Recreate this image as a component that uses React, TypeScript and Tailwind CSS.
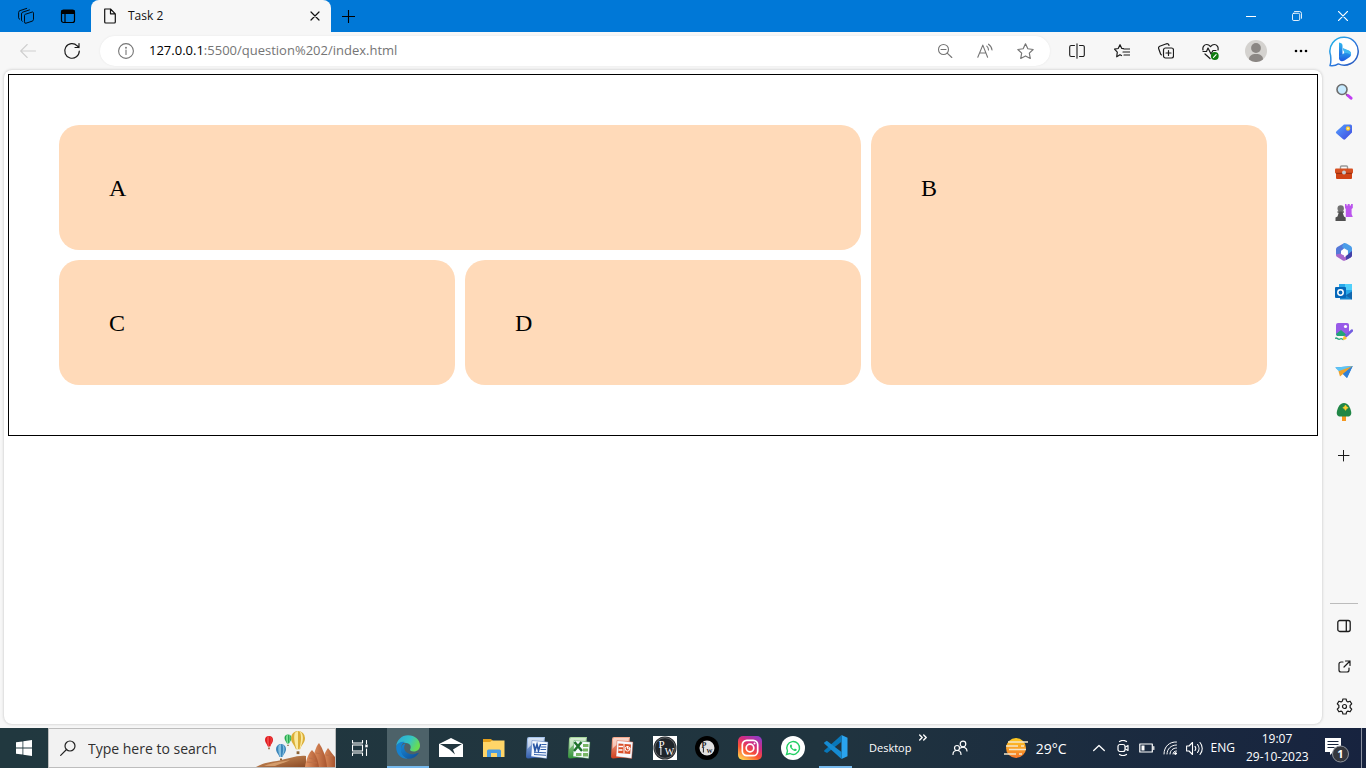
import React, { type ReactNode } from 'react';

type IconProps = { size?: number; box?: string; className?: string; width?: number; children: ReactNode };

function Line({ size = 16, box = '0 0 16 16', className = '', width = 1.1, children }: IconProps) {
  return (
    <svg width={size} height={size} viewBox={box} fill="none" stroke="currentColor" strokeWidth={width}
      strokeLinecap="round" strokeLinejoin="round" className={`shrink-0 ${className}`} aria-hidden="true">
      {children}
    </svg>
  );
}

function Art({ size = 18, box = '0 0 18 18', className = '', children }: IconProps) {
  return (
    <svg width={size} height={size} viewBox={box} className={`shrink-0 ${className}`} aria-hidden="true">
      {children}
    </svg>
  );
}

function IconButton({ label, className = '', children }: { label: string; className?: string; children: ReactNode }) {
  return (
    <button type="button" aria-label={label} className={`flex shrink-0 items-center justify-center ${className}`}>
      {children}
    </button>
  );
}

function TitleBar() {
  return (
    <header className="flex h-8 shrink-0 bg-[#0078d7]">
      <IconButton label="Workspaces" className="ml-1 w-11">
        <Line size={18} box="0 0 18 18" width={0.9}>
          <path d="M7.500 8.300a1 1 0 0 1 .8-1l6.700-2.200a1 1 0 0 1 1.500 1v6.200a2 2 0 0 1-1.400 1.900l-6.100 2a1.100 1.100 0 0 1-1.500-1z" />
          <path d="M5.200 14.300a1.500 1.500 0 0 1-.7-1.300V7a2 2 0 0 1 1.400-1.900l6.600-2.200" />
          <path d="M2.600 12.200a1.500 1.500 0 0 1-1-1.400V5.500A2 2 0 0 1 3 3.600l6.700-2.200" />
        </Line>
      </IconButton>
      <IconButton label="Tab actions" className="mr-[3px] w-10">
        <Line width={1.2}>
          <rect x="1.500" y="2" width="13" height="12.500" rx="2" />
          <path d="M2 2.500h12v3H2z" fill="currentColor" />
          <path d="M5 6v8" />
        </Line>
      </IconButton>
      <div className="flex w-60 items-center rounded-t-lg bg-[#f7f7f7] pl-[11px] pr-2 text-[#111]">
        <Line size={16} width={1.2} className="mr-[10px]">
          <path d="M2.700 1h5.800l4.800 4.800V14a1 1 0 0 1-1 1H3.700a1 1 0 0 1-1-1z M8.500 1v4.800h4.800" />
        </Line>
        <span className="grow text-[12px] tracking-normal">Task 2</span>
        <IconButton label="Close tab" className="size-4">
          <Line size={10} box="0 0 10 10" width={1.2}><path d="m1 1 8 8M9 1 1 9" /></Line>
        </IconButton>
      </div>
      <IconButton label="New tab" className="w-[35px]">
        <Line size={13} box="0 0 13 13"><path d="M6.500 0v13M0 6.500h13" /></Line>
      </IconButton>
      <div className="ml-auto flex text-white">
        <IconButton label="Minimize" className="w-[46px]">
          <Line size={10} box="0 0 10 10" width={1}><path d="M0 5.500h10" /></Line>
        </IconButton>
        <IconButton label="Restore" className="w-[46px]">
          <Line size={10} box="0 0 11 11" width={1}>
            <rect x=".5" y="2.500" width="8" height="8" rx="1.500" />
            <path d="M2.800.5H8A2.500 2.500 0 0 1 10.500 3v5" />
          </Line>
        </IconButton>
        <IconButton label="Close" className="w-[46px]">
          <Line size={10} box="0 0 10 10" width={1.2}><path d="m0 0 10 10M10 0 0 10" /></Line>
        </IconButton>
      </div>
    </header>
  );
}

function Toolbar() {
  return (
    <div className="flex h-[38px] shrink-0 items-center text-[#1b1b1b]">
      <IconButton label="Back" className="ml-2 h-8 w-10 text-[#cfcfcf]">
        <Line size={16}><path d="M15.500 8H.7M7.200 1.500.7 8l6.500 6.500" /></Line>
      </IconButton>
      <IconButton label="Refresh" className="ml-1 h-8 w-10">
        <Line size={18} box="0 0 18 18" width={1.200}>
          <path d="M16.300 9A7.300 7.300 0 1 1 14.200 3.800L16 5.500M16 1.500v4h-4" />
        </Line>
      </IconButton>
      <form className="ml-2 flex h-[30px] grow items-center rounded-full bg-white pl-[18px] pr-[5px] text-[#757575] shadow-[0_0_2px_#e4e4e4]">
        <IconButton label="Site information" className="size-4">
          <Line width={1.100}>
            <circle cx="8" cy="8" r="7.400" /><path d="M8 7v4.500" /><circle cx="8" cy="4.700" r=".4" />
          </Line>
        </IconButton>
        <p className="ml-[15px] grow text-[13px]">
          <span className="text-black">127.0.0.1</span>:5500/question%202/index.html
        </p>
        <IconButton label="Zoom" className="w-10">
          <Line><circle cx="6.500" cy="6.500" r="5" /><path d="m10.200 10.200 4.600 4.300M4 6.500h5" /></Line>
        </IconButton>
        <IconButton label="Read aloud" className="w-10">
          <Line><path d="m.8 14.300 5-12.200 4.800 12.200M2.600 10h6.200M9.800 3.200a5 5 0 0 1 1.700 3.800M11.500 1.200A8 8 0 0 1 15 7" /></Line>
        </IconButton>
        <IconButton label="Add to favorites" className="w-10">
          <Line size={17}><path d="m8 .8 2.200 4.600 5 .7-3.600 3.500.9 5L8 12.200l-4.500 2.400.9-5L.8 6.100l5-.7z" /></Line>
        </IconButton>
      </form>
      <div className="flex w-[272px] items-center pl-[5px]">
        <IconButton label="Split screen" className="w-11">
          <Line><path d="M5.500 2.500H2.200A1.500 1.500 0 0 0 .7 4v8a1.500 1.500 0 0 0 1.500 1.500h3.300M10.500 2.500h3.300A1.500 1.500 0 0 1 15.300 4v8a1.500 1.500 0 0 1-1.500 1.500h-3.300M8 .7v14.600" /></Line>
        </IconButton>
        <IconButton label="Favorites" className="w-[45px]">
          <Line width={1.200}>
            <path d="M9.500 5.700 7.800 5.400 6 1.700 4.200 5.500.5 6.200l2.800 3-.6 4.600L6 11.700l1.500.8M10 6h5.500M9 9h6.500M10 12h5.500" />
          </Line>
        </IconButton>
        <IconButton label="Collections" className="w-11">
          <Line width={1.200}>
            <rect x="5.500" y="5" width="10" height="10" rx="2" />
            <path d="M8 10h5M10.500 7.500v5M3.400 11.800 2.600 11 .7 5.800a2 2 0 0 1 1-2.500L8.500.8A2 2 0 0 1 11 2.500" />
          </Line>
        </IconButton>
        <IconButton label="Browser essentials" className="w-11">
          <Line size={17} box="0 0 17 17" width={1.200}>
            <path d="M1 7C.3 3.800 2.200 1.500 4.700 1.500c1.500 0 2.700.8 3.800 2.200 1.100-1.400 2.300-2.200 3.800-2.200 2.500 0 4.400 2.300 3.700 5.500M1 8.500h3.500L6 5l3 6 2-3.500h3M3 11l5 4.500" />
            <circle cx="12.800" cy="13" r="3.900" fill="#107c10" stroke="none" />
            <path d="m11.500 14.300 2.600-2.600" stroke="#fff" />
          </Line>
        </IconButton>
        <IconButton label="Profile" className="w-[47px]">
          <Art size={22} box="0 0 22 22">
            <circle cx="11" cy="11" r="11" fill="#d4d2cf" />
            <circle cx="11" cy="8" r="4.900" fill="#8b8784" />
            <path d="M4 19.500c0-3.600 2.500-5.500 7-5.500s7 1.900 7 5.500a11 11 0 0 1-14 0z" fill="#8b8784" />
          </Art>
        </IconButton>
        <IconButton label="Settings and more" className="w-11">
          <Art size={14} box="0 0 14 4">
            <circle cx="2" cy="2" r="1.300" /><circle cx="7" cy="2" r="1.300" /><circle cx="12" cy="2" r="1.300" />
          </Art>
        </IconButton>
      </div>
    </div>
  );
}

function Cell({ children, className = '' }: { children: ReactNode; className?: string }) {
  return <div className={`rounded-[20px] bg-[#ffdab9] px-[50px] pb-[48px] pt-[50px] ${className}`}>{children}</div>;
}

function Page() {
  return (
    <main className="mb-1 ml-1 grow rounded-lg bg-white p-1 shadow-[0_0_3px_#bdbdbd]">
      <div className="grid grid-cols-3 gap-[10px] border border-black p-[50px] font-['Liberation_Serif',serif] text-[24px] leading-[27px] text-black">
        <Cell className="col-span-2">A</Cell>
        <Cell className="row-span-2">B</Cell>
        <Cell>C</Cell>
        <Cell>D</Cell>
      </div>
    </main>
  );
}

function Bing() {
  return (
    <svg width="32" height="32" viewBox="0 0 32 32" className="shrink-0" aria-hidden="true">
      <defs>
        <linearGradient id="bingRing" x1="0" y1="0" x2="1" y2="1">
          <stop offset="0" stopColor="#24bde9" /><stop offset=".5" stopColor="#2f7de0" /><stop offset="1" stopColor="#2450b8" />
        </linearGradient>
        <linearGradient id="bingB" x1="0" y1="0" x2="0" y2="1">
          <stop offset="0" stopColor="#2fb8ef" /><stop offset="1" stopColor="#1d56df" />
        </linearGradient>
      </defs>
      <path d="M16.500 1.200a14 14 0 1 1-6.200 26.700c-2.500 1.700-5.300 2.200-8.300 1.700 1.300-2.800 1-6 .6-10A14 14 0 0 1 16.500 1.200z" fill="#fff" stroke="url(#bingRing)" strokeWidth="1.500" strokeLinejoin="round" />
      <path d="M11 6.500c2.500.5 3.500 1.300 3.500 3V20L11 23z" fill="url(#bingB)" />
      <path d="m11 20 5.500-3-1.700-4.500 6 2.300c2.800 1.200 3 4.500 1 6.300l-5.300 3.400C13.500 26 11 25 11 22z" fill="url(#bingB)" />
      <path d="m14.800 12 6 2.500c1.800.8 2.600 2.600 2 4.500-1.500-1.800-4-2-6.300-2z" fill="#43b9f2" />
    </svg>
  );
}

function Sidebar() {
  const item = 'h-10 w-11';
  return (
    <aside className="flex w-11 shrink-0 flex-col items-center pb-[2px] text-[#1b1b1b]">
      <IconButton label="Bing Chat" className="h-10 w-11"><Bing /></IconButton>
      <IconButton label="Search" className={item}>
        <Art>
          <path d="m11 11 2 2" stroke="#686868" strokeWidth="1.800" />
          <path d="m13 12.500 3 2.700" stroke="#c13df2" strokeWidth="3" strokeLinecap="round" />
          <circle cx="7" cy="6.500" r="5" fill="#c6eaff" stroke="#6d6d6d" strokeWidth="1.600" />
        </Art>
      </IconButton>
      <IconButton label="Shopping" className={item}>
        <Art>
          <defs><linearGradient id="tag" x2="1" y2="1"><stop stopColor="#55a2ff" /><stop offset="1" stopColor="#4047df" /></linearGradient></defs>
          <path d="M9 1.500h6.500a1.500 1.500 0 0 1 1.500 1.500v6.500l-6.800 6.800a1.500 1.500 0 0 1-2 0L1.500 10.500a1.500 1.500 0 0 1 0-2.300z" fill="url(#tag)" />
          <circle cx="13" cy="5.500" r="2.200" fill="#ffca28" /><circle cx="13" cy="5.500" r=".9" fill="#fff4c0" />
        </Art>
      </IconButton>
      <IconButton label="Tools" className={item}>
        <Art>
          <path d="M5.500 6V4a1 1 0 0 1 1-1h5a1 1 0 0 1 1 1v2" fill="none" stroke="#999" strokeWidth="1.400" />
          <rect x="0" y="5.500" width="18" height="5" rx="1" fill="#d65022" />
          <path d="M1 10h16v5a1 1 0 0 1-1 1H2a1 1 0 0 1-1-1z" fill="#d04315" /><path d="M1 9.800h16v1H1z" fill="#8f2c0f" />
          <circle cx="9" cy="9.500" r="2" fill="#c5cbd0" />
        </Art>
      </IconButton>
      <IconButton label="Games" className={item}>
        <Art>
          <path d="M10 1h1.500v1.500h1.200V1h2v1.500H16V1h1.800v4l-1.200 1v5l1.200 3h-7V6l-.8-1z" fill="#bb55ed" />
          <circle cx="5.700" cy="5.500" r="3.200" fill="#717171" /><path d="M2.500 8.300h6.400v1.500H7.700L9 13.500l1.700 1V18H.5v-3.500l2-1 1.200-3.700H2.500z" fill="#505050" />
        </Art>
      </IconButton>
      <IconButton label="Microsoft 365" className={item}>
        <Art>
          <path d="M8.500.4 2.300 4A2.500 2.500 0 0 0 1 6.200v5.500l4 2 2-1V7.500L12 2z" fill="#5579d8" />
          <path d="M8.500.4c1-.5 2-.4 3 .2L15.700 3A2.500 2.500 0 0 1 17 5.200v5.600l-4 .5V7.500L7 4z" fill="#4b9de9" />
          <path d="M1 11.500 9 9.800v4.500l8-4.500v2.400a2.500 2.500 0 0 1-1.300 2.200l-5.500 3a2.500 2.500 0 0 1-2.400 0l-5.500-3.300A2.500 2.500 0 0 1 1 11.500z" fill="#a867cc" />
          <path d="M11 13 17 8v4.200a2.500 2.500 0 0 1-1.300 2.200l-4.500 2.500z" fill="#4141a8" />
          <path d="m9 6 3 1.700v3.200L9 12.500l-3-1.600V7.700z" fill="#fff" />
        </Art>
      </IconButton>
      <IconButton label="Outlook" className={item}>
        <Art>
          <path d="M4 1h13v13H4z" fill="#28a8ea" /><path d="M10 1h7v6h-7z" fill="#50d0fb" /><path d="M5 8.500 11 12l6-3.500v8H5z" fill="#1686cf" /><path d="m17 8.500-6 4 6 4z" fill="#1267ae" />
          <rect x="0" y="4" width="11" height="11" rx="1" fill="#0567b9" />
          <circle cx="5.500" cy="9.500" r="2.700" fill="none" stroke="#fff" strokeWidth="1.500" />
        </Art>
      </IconButton>
      <IconButton label="Image Creator" className={item}>
        <Art>
          <rect x="1" y="0" width="13" height="13" rx="2" fill="#985ae8" /><path d="m1 11 5-4 7 6H2z" fill="#23a477" /><circle cx="10.500" cy="3.500" r="1.600" fill="#fff" />
          <path d="M0 15.500c2-2 3 2 5 .5s2 1 3.500.5" fill="none" stroke="#26a17b" strokeWidth="1.300" />
          <path d="m11 13 6-5.500" stroke="#735de0" strokeWidth="2.500" strokeLinecap="round" /><path d="m7.500 16.500 1.500-4 3 2.500-2 1.800z" fill="#ffbe2f" />
        </Art>
      </IconButton>
      <IconButton label="Drop" className={item}>
        <Art>
          <path d="M.3 4.500 17.700 3 12 15l-4-4z" fill="#2688db" /><path d="M.3 4.500 17.700 3 5 9.500z" fill="#5dc5f5" /><path d="M17.700 3 3.500 8.200 5 13.500l3-2.500z" fill="#efa22c" /><path d="m17.700 3-9.700 8 4 4z" fill="#3180d8" />
        </Art>
      </IconButton>
      <IconButton label="E-tree" className={item}>
        <Art>
          <path d="M7 12h4v6H7z" fill="#f5981f" /><path d="M9 0c4 0 6 4 7 8s-1 5.500-3 5.500H5C3 13.500 1 12 2 8s3-8 7-8z" fill="#218747" />
          <path d="m10.500 2 1 1.700 1.700 1-1.700 1-1 1.700-1-1.700-1.700-1 1.700-1z" fill="#ffd02e" stroke="#ffd02e" strokeWidth=".6" />
        </Art>
      </IconButton>
      <IconButton label="Customize sidebar" className="mt-1 h-10 w-11">
        <Line size={12} box="0 0 12 12" width={1}><path d="M5.500 0v11M0 5.500h11" /></Line>
      </IconButton>
      <hr className="mt-auto w-7 border-[#bcbcbc]" />
      <IconButton label="Sidebar layout" className="mt-[2px] h-10 w-11">
        <Line size={14} box="0 0 14 14" width={1.300}><rect x=".8" y="1.500" width="12.400" height="11" rx="2" /><path d="M9.300 2v10" /></Line>
      </IconButton>
      <IconButton label="Open link" className={item}>
        <Line size={13} box="0 0 13 13" width={1.200}><path d="M5 2H3a2 2 0 0 0-2 2v6a2 2 0 0 0 2 2h6a2 2 0 0 0 2-2V8M7.500 1H12v4.500M12 1 6 7" /></Line>
      </IconButton>
      <IconButton label="Settings" className={item}>
        <Line size={17} box="0 0 17 17" width={1.200}>
          <path d="M6.900 1h3.200l.5 2.100 1.300.8 2.200-.7 1.600 2.700-1.600 1.600v2l1.600 1.600-1.600 2.700-2.200-.7-1.300.8-.5 2.100H6.900l-.5-2.100-1.300-.8-2.200.7-1.600-2.700 1.600-1.600v-2L1.300 5.900l1.600-2.700 2.200.7 1.300-.8z" /><circle cx="8.500" cy="8.500" r="2" />
        </Line>
      </IconButton>
    </aside>
  );
}

function Balloon({ x, y, r, fill, light }: { x: number; y: number; r: number; fill: string; light: string }) {
  return (
    <g transform={`translate(${x} ${y}) scale(${r})`}>
      <path d="M-1 0a1 1 0 1 1 2 0c0 .7-.5 1-.7 1.600h-.6C-.5 1-1 .7-1 0z" fill={fill} />
      <path d="M-.45-.75C-.7 0-.4 1-.2 1.600H0V-1zM.2-1c.4.6.2 1.800 0 2.600h.1C.5 1 .7.500.7 0 .7-.4.6-.8.2-1z" fill={light} />
      <path d="M-.2 1.900h.4v.4h-.4z" fill="#8d6335" />
    </g>
  );
}

function SearchArt() {
  return (
    <svg width="80" height="38" viewBox="0 0 80 38" className="shrink-0" aria-hidden="true">
      <defs>
        <linearGradient id="hill" y2="1" x2="1"><stop stopColor="#d39862" /><stop offset="1" stopColor="#8b4a25" /></linearGradient>
        <linearGradient id="rock"><stop stopColor="#e39463" /><stop offset="1" stopColor="#a8542e" /></linearGradient>
      </defs>
      <Balloon x={14} y={11} r={4} fill="#df1c20" light="#f04444" />
      <Balloon x={33} y={9} r={3.500} fill="#28a951" light="#7cdf94" />
      <Balloon x={26} y={20} r={5} fill="#3d86ba" light="#85c0df" />
      <Balloon x={43} y={9} r={7} fill="#dbae37" light="#fae9a0" />
      <path d="M1 38c7-4 13-5 21-6 11-2 20-6 29-5v11z" fill="url(#hill)" />
      <path d="M9 37c9-4 18-4 26-6-5 3-11 4-15 6z" fill="#f0bd88" opacity=".6" />
      <path d="M67 38c0-9 3-15 6-19 3 4 5 7 7 9v10z" fill="url(#rock)" />
      <path d="M57 38c1-11 3-19 7-24 4 6 7 14 8 24z" fill="url(#rock)" />
      <path d="M50 38c1-8 4-14 7-17 4 4 6 10 7 17z" fill="url(#rock)" />
      <path d="m61 24 6 1M54 29l6 1M71 26l7 1M52 33l10 1" stroke="#bd7049" />
    </svg>
  );
}

function Office({ id, top, bottom, children }: { id: string; top: string; bottom: string; children: ReactNode }) {
  return (
    <Art size={24} box="0 0 24 24">
      <defs><linearGradient id={id} x2="0" y2="1"><stop stopColor={top} /><stop offset="1" stopColor={bottom} /></linearGradient></defs>
      <path d="M4 1h16l-2 20-15 1.500A2 2 0 0 1 1 20.500L2 3a2 2 0 0 1 2-2z" fill={`url(#${id})`} />
      <path d="M4 2h15l-.6 3C12 5 6 8 2.500 13L3 3z" fill="#fff" opacity=".55" />
      <path d="M7 4.500 23 6l-1.300 16.500L6 20.500z" fill="#f6faff" stroke={bottom} strokeWidth=".4" />
      {children}
    </Art>
  );
}

function TaskIcons() {
  const cell = 'h-10';
  return (
    <div className="ml-[3px] grid w-[470px] shrink-0 grid-cols-11">
      <IconButton label="Microsoft Edge" className="h-10 w-[42px] border-b-2 border-[#76b9ed] bg-[#4d6269]">
        <Art size={24} box="0 0 24 24">
          <defs>
            <linearGradient id="edgeTop" x2="1" y2=".4"><stop stopColor="#28a7dc" /><stop offset=".6" stopColor="#35c4c4" /><stop offset="1" stopColor="#67dc55" /></linearGradient>
            <linearGradient id="edgeLow" x2="1" y2="1"><stop stopColor="#1688d8" /><stop offset="1" stopColor="#114b91" /></linearGradient>
          </defs>
          <path d="M.2 11C1 5 5.500.2 12 .2 19 .2 24 5 24 10.500c0 3.700-2.700 6-6.200 6-3 0-4.300-1.200-3.600-2.300 1.500-2.500 0-6-4-6.200C6 7.500 2 8 .2 11z" fill="url(#edgeTop)" />
          <path d="M.2 11.500C1.500 8 5 6.300 8.700 7c-2.700 1.500-3.700 4-3.700 6.800 0 5 3.500 8.500 6.500 9.900C5 24-.3 18.500.2 11.500z" fill="#1681cf" />
          <path d="M9.500 8.500C6 13 9.500 20.500 18.500 19c1.500-.2 3-1 3.700-1.200.6-.1.500.5.300.8C20 22.300 16 24 12 23.800 7 22 4.500 18 5 13.800c.3-3 2-4.800 4.500-5.300z" fill="url(#edgeLow)" />
        </Art>
      </IconButton>
      <IconButton label="Mail" className={cell}>
        <Art size={24} box="0 0 24 24"><path d="M0 8 12 2l12 6v13H0z" fill="#fff" /><path d="M1 8h22l-9 5.500 2 5-5.500-5z" fill="#21363f" /></Art>
      </IconButton>
      <IconButton label="File Explorer" className={cell}>
        <Art size={22} box="0 0 22 22"><path d="M0 2h8l2 2h11v5H0z" fill="#e5a01c" /><path d="M0 5h7l2-1.500h12.500V20H0z" fill="#ffd568" /><path d="M4 20v-6a1.500 1.500 0 0 1 1.500-1.500h11A1.500 1.500 0 0 1 18 14v6h-4v-4H8v4z" fill="#4a9be0" /></Art>
      </IconButton>
      <IconButton label="Word" className={cell}>
        <Office id="word" top="#a8c5ec" bottom="#335ead">
          <path d="m8.500 7.500 1.500 7 2-6 1.500 6 2.200-6.500" fill="none" stroke="#2a57a5" strokeWidth="1.700" />
          <path d="M16.500 8.500h5M16 11h5.300M15.500 13.500h5.600M9 16.200l12 .6M9 18.500l12 .8" stroke="#3461ad" />
        </Office>
      </IconButton>
      <IconButton label="Excel" className={cell}>
        <Office id="excel" top="#a9d89e" bottom="#33923b">
          <path d="M16 8h5.500v3H16zM16 12.500h5v3h-5zM9 17h5.500v3H9zM16 17h5v3.500h-5z" fill="#78b665" /><path d="m7.500 6 7.500 9M14.500 6 7 15" stroke="#20722c" strokeWidth="2.500" />
        </Office>
      </IconButton>
      <IconButton label="PowerPoint" className={cell}>
        <Office id="powerpoint" top="#f7ac90" bottom="#cf4020">
          <path d="M8.500 7.500 21 8.500l-.8 9.500-12-1z" fill="#da4f2a" />
          <path d="M8.500 10.500h4.500M8.500 14h4" stroke="#fff" strokeWidth="1.300" />
          <path d="M14 8v9.500" stroke="#fff" />
          <circle cx="17.500" cy="12.800" r="2.300" fill="#da4f2a" stroke="#fff" /><path d="M17.500 12.800V10M17.500 12.800h3" stroke="#fff" />
        </Office>
      </IconButton>
      <IconButton label="PW" className={cell}>
        <Art size={24} box="0 0 24 24">
          <path d="M0 0h24v24H0z" fill="#fff" /><circle cx="12" cy="12" r="11.500" fill="#20252a" /><circle cx="12" cy="12" r="10.300" fill="none" stroke="#a5a5a5" strokeWidth=".5" />
          <text x="5.500" y="12" fontSize="11" fontFamily="Liberation Serif" fill="#fff">P</text><text x="11.700" y="19" fontSize="10" fontFamily="Liberation Serif" fill="#fff">W</text><path d="M7.900 11v8" stroke="#fff" />
        </Art>
      </IconButton>
      <IconButton label="PW Live" className={cell}>
        <Art size={24} box="0 0 24 24">
          <circle cx="12" cy="12" r="12" fill="#000" /><circle cx="12" cy="12" r="7.500" fill="#e0e0e0" />
          <text x="6.500" y="12" fontSize="8" fontWeight="bold" fontFamily="Liberation Serif" fill="#222">P</text><text x="11.500" y="17" fontSize="6" fontWeight="bold" fontFamily="Liberation Serif" fill="#222">W</text><path d="M8.400 12v4.500" stroke="#222" />
        </Art>
      </IconButton>
      <IconButton label="Instagram" className={cell}>
        <Art size={24} box="0 0 24 24">
          <defs>
            <linearGradient id="insta" x1=".2" y1="1" x2=".8" y2="0"><stop stopColor="#ffd34f" /><stop offset=".35" stopColor="#fb5531" /><stop offset=".65" stopColor="#d52b7c" /><stop offset="1" stopColor="#923bc4" /></linearGradient>
          </defs>
          <rect width="24" height="24" rx="5" fill="url(#insta)" /><rect x="4.300" y="4.300" width="15.400" height="15.400" rx="4.500" fill="none" stroke="#fff" strokeWidth="1.700" /><circle cx="12" cy="12" r="3.800" fill="none" stroke="#fff" strokeWidth="1.700" /><circle cx="16.500" cy="7.500" r="1" fill="#fff" />
        </Art>
      </IconButton>
      <IconButton label="WhatsApp" className={cell}>
        <Art size={24} box="0 0 24 24">
          <circle cx="12" cy="12" r="12" fill="#fff" /><path d="m5.500 18.500 1-3.500a6.400 6.400 0 1 1 2.400 2.500z" fill="none" stroke="#24cf65" strokeWidth="1.400" />
          <path d="M9.800 8.500c-1.500.8-1 3 1 4.800s4 2.500 4.900 1l.1-.9-1.900-.9-.9.900c-1.200-.5-2-1.300-2.500-2.300l.7-.8-.8-1.800z" fill="#24cf65" />
        </Art>
      </IconButton>
      <IconButton label="Visual Studio Code" className={cell}>
        <span className="flex h-10 w-[33px] items-center justify-center border-b-2 border-[#76b9ed]">
          <Art size={24} box="0 0 24 24">
            <path d="m17.500 0 6 2.800v18.400l-6 2.800z" fill="#2aa4ef" /><path d="M17.500 0v6.800L3 18 .2 16.600v-1z" fill="#0877b9" /><path d="m.2 7.600 2.600-1.800L17.500 17v7L.2 8.600z" fill="#168bd2" />
          </Art>
        </span>
      </IconButton>
    </div>
  );
}

function Taskbar() {
  return (
    <footer className="flex h-10 shrink-0 items-center bg-linear-to-r from-[#21383f] via-[#20343f] via-60% to-[#17233f] text-white">
      <IconButton label="Start" className="h-10 w-12">
        <Art size={16} box="0 0 16 16"><path d="m0 2.300 6.500-.9v6.200H0zM7.300 1.300 16 0v7.600H7.300zM0 8.400h6.500v6.200L0 13.700zM7.300 8.400H16V16l-8.700-1.300z" fill="#fff" /></Art>
      </IconButton>
      <label className="flex h-10 w-72 shrink-0 items-center overflow-hidden border border-[#bdbdbd] bg-[#f2f2f2] pl-[11px] text-[#222]">
        <Line size={16} width={1.200}><circle cx="10" cy="6" r="5" /><path d="M6.500 9.500.7 15.300" /></Line>
        <input aria-label="Search" placeholder="Type here to search" className="ml-3 w-0 min-w-0 grow bg-transparent text-[14px] outline-none placeholder:text-[#303030]" />
        <SearchArt />
      </label>
      <IconButton label="Task View" className="h-10 w-12">
        <Line width={1.100}><path d="M.5.5V3h10V.5M.5 15.500V13h10v2.500M.5 5h10v6H.5zM14.500.5v3M14.500 9v6.500" /><path d="M13.300 4.500h2.400v2.800h-2.400z" fill="currentColor" stroke="none" /></Line>
      </IconButton>
      <TaskIcons />
      <span className="ml-3 text-[11px]">Desktop</span>
      <IconButton label="More desktop items" className="mb-5 ml-2 size-2">
        <Line size={8} box="0 0 8 8" width={1.400}><path d="m.7 1 2.500 2.500L.7 6M4.700 1l2.500 2.500L4.700 6" /></Line>
      </IconButton>
      <div className="ml-auto flex items-center">
        <IconButton label="People" className="mr-7 w-8">
          <Line width={1.200}><circle cx="5" cy="8" r="2.500" /><path d="M1 14.500C1 12 2.500 10.500 5 10.500S9 12 9 14.500" /><circle cx="11" cy="4" r="2.800" /><path d="M8.500 8C12 6 15 8.500 15 11" /></Line>
        </IconButton>
        <button type="button" className="flex items-center gap-2 text-[14px]">
          <Art size={24} box="0 0 24 24">
            <defs><linearGradient id="sun" x2="0" y2="1"><stop stopColor="#ffcc21" /><stop offset="1" stopColor="#f5762b" /></linearGradient></defs>
            <circle cx="12" cy="12" r="10" fill="url(#sun)" /><path d="M4 6h20M2 10h12m3 0h3M5 13.500h17M0 18h12m3 0h3" stroke="#f4e6ca" strokeWidth="1.600" />
          </Art>
          29°C
        </button>
        <div className="ml-5 flex">
          <IconButton label="Show hidden icons" className="w-6"><Line size={12} box="0 0 12 12" width={1.300}><path d="m.7 8.500 5.300-5 5.300 5" /></Line></IconButton>
          <IconButton label="Meet now" className="w-6"><Line width={1.200}><rect x="3" y="4.500" width="7" height="7" rx="2" /><path d="m10.500 7 2.500-1.500v5L10.500 9M4.500 1.500C6.500.2 9.500.2 11.500 1.500M4.500 14.500c2 1.300 5 1.300 7 0" /></Line></IconButton>
          <IconButton label="Battery" className="w-6"><Line size={16} width={1.200}><path d="M.8 4h12.500v8H.8zM14.800 6.500v3" /><path d="M2.500 5.500h3v5h-3z" fill="currentColor" stroke="none" /></Line></IconButton>
          <IconButton label="Network" className="w-6"><Line width={1}><path d="M1 14C1 6.500 6.500 1.500 13.500 2M4 14c0-5 4-9 9.500-9M7 14c0-3.500 3-6 6.500-6M10 14c0-2 1.500-3 3.500-3" /><circle cx="12.500" cy="13.500" r="1" fill="currentColor" /></Line></IconButton>
          <IconButton label="Volume" className="w-6"><Line size={17} box="0 0 17 16" width={1.100}><path d="M.6 5.500H3L6.500 2v12L3 10.500H.6zM9 6c1 1 1 3 0 4M11.500 4c2 2.300 2 5.700 0 8M14 2c3 3.500 3 8.500 0 12" /></Line></IconButton>
        </div>
        <button type="button" className="ml-1 text-[12px]">ENG</button>
        <button type="button" className="ml-[11px] w-[62px] whitespace-nowrap text-center text-[12px] leading-[18px]">19:07<br />29-10-2023</button>
        <button type="button" aria-label="Notifications, 1 new" className="ml-4 h-10 w-[38px] border-r border-[#8a909f]">
          <svg width="26" height="26" viewBox="0 0 26 26" className="mt-1" aria-hidden="true">
            <path d="M1 1h16v14H9l-3 3v-3H1z" fill="#fff" /><path d="M3.500 4.500h11M3.500 7.500h11M3.500 10.500h7" stroke="#18243b" />
            <circle cx="16.500" cy="17" r="8" fill="#35373d" stroke="#8f949c" />
            <text x="16.500" y="21" textAnchor="middle" fontSize="11" fontWeight="bold" fontFamily="Open Sans" fill="#fff">1</text>
          </svg>
        </button>
        <span className="w-1" />
      </div>
    </footer>
  );
}

export default function App() {
  return (
    <div className="flex min-h-screen flex-col bg-[#f7f7f7] font-['Open_Sans','Noto_Sans',sans-serif]">
      <TitleBar />
      <div className="flex grow">
        <div className="flex min-w-0 grow flex-col">
          <Toolbar />
          <Page />
        </div>
        <Sidebar />
      </div>
      <Taskbar />
    </div>
  );
}
